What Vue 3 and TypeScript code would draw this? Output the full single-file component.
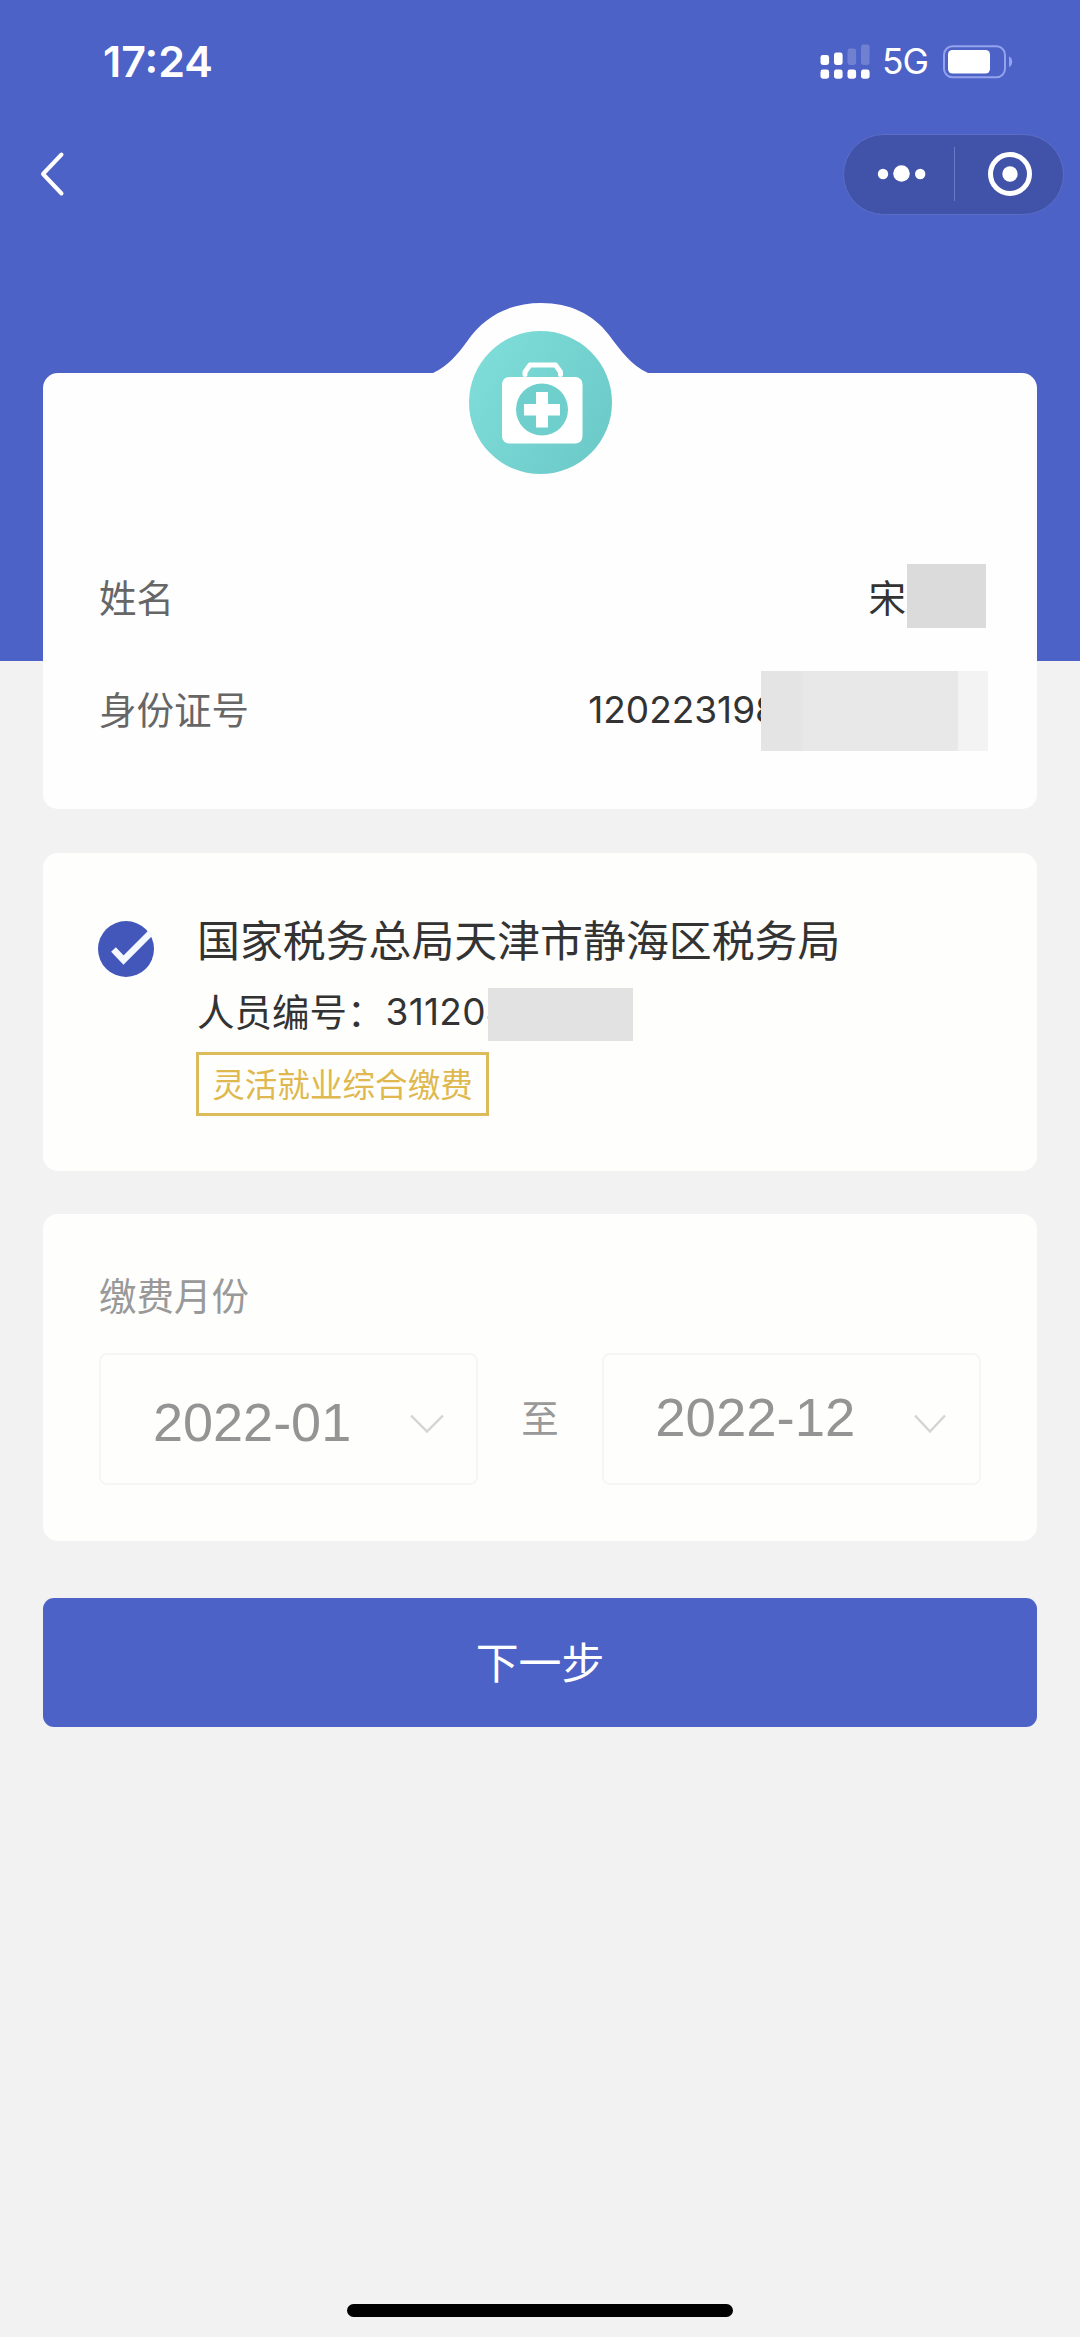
<script setup lang="ts">
import { ref } from 'vue'

interface Period {
  id: string
  value: string
}

const checked = ref(true)
const start: Period = { id: 'start', value: '2022-01' }
const end: Period = { id: 'end', value: '2022-12' }
</script>

<template>
  <div class="page">
    <header class="hero">
      <div class="status">
        <span class="time">17:24</span>
        <div class="indicators">
          <svg class="signal" width="50" height="36" viewBox="0 0 50 36" fill="#fff">
            <rect x="0.5" y="11" width="8.6" height="10" rx="2.4" />
            <rect x="14" y="8.5" width="8.6" height="12.5" rx="2.4" />
            <g opacity="0.2">
              <rect x="27.5" y="4.5" width="8.6" height="16.5" rx="2.4" />
              <rect x="41" y="0.5" width="8.6" height="20.5" rx="2.4" />
            </g>
            <rect x="0.5" y="25.5" width="8.6" height="9.2" rx="2.4" />
            <rect x="14" y="25.5" width="8.6" height="9.2" rx="2.4" />
            <rect x="27.5" y="25.5" width="8.6" height="9.2" rx="2.4" />
            <rect x="41" y="25.5" width="8.6" height="9.2" rx="2.4" />
          </svg>
          <span class="network">5G</span>
          <svg class="battery" width="70" height="34" viewBox="0 0 70 34">
            <rect x="1" y="1.2" width="61" height="31" rx="8.5" fill="none" stroke="#94a2ee" stroke-width="2" />
            <rect x="5" y="5" width="42" height="23.5" rx="4.5" fill="#fff" />
            <path d="M66 11.500C70.300 13 70.300 20.500 66 22z" fill="#94a2ee" />
          </svg>
        </div>
      </div>
      <nav class="nav">
        <svg class="back" width="30" height="50" viewBox="0 0 30 50" fill="none" stroke="#fff" stroke-width="4" stroke-linecap="round" stroke-linejoin="round">
          <path d="M24.500 5.500L6 25L24.500 44.500" />
        </svg>
        <div class="capsule">
          <svg class="more" width="50" height="20" viewBox="0 0 50 20" fill="#fff">
            <circle cx="6" cy="10" r="5.2" />
            <circle cx="24.500" cy="9.500" r="8.300" />
            <circle cx="43.200" cy="10" r="5.200" />
          </svg>
          <i class="divider"></i>
          <svg class="close" width="46" height="46" viewBox="0 0 46 46">
            <circle cx="23" cy="23" r="19.500" fill="none" stroke="#fff" stroke-width="5" />
            <circle cx="23" cy="23" r="7.700" fill="#fff" />
          </svg>
        </div>
      </nav>
    </header>

    <main class="content">
      <section class="card person">
        <svg class="emblem" width="220" height="175" viewBox="0 0 220 175">
          <defs>
            <linearGradient id="mint" x1="0" y1="0.200" x2="1" y2="0.800">
              <stop offset="0" stop-color="#7fded9" />
              <stop offset="1" stop-color="#6bc9c8" />
            </linearGradient>
          </defs>
          <path d="M2 71C17 64 26 53 36 39.500C54 13 80 1 110 1C139 1 162 12 178 33C190 49 200 63 217 71V75H2z" fill="#fefefe" />
          <circle cx="109.500" cy="100.500" r="71.500" fill="url(#mint)" />
          <path d="M94 72.500V70L99 63H124.500L129.500 70V72.500" fill="none" stroke="#fff" stroke-width="5" stroke-linecap="round" stroke-linejoin="round" />
          <rect x="71" y="75" width="80.500" height="66.500" rx="7" fill="#fff" />
          <circle cx="111" cy="107.500" r="26" fill="#6fcfcc" />
          <path d="M105 90h12v12h12v11.500h-12v12h-12v-12h-12v-11.500h12z" fill="#fff" />
        </svg>
        <div class="row name-row">
          <span class="label">姓名</span>
          <span class="value"><span class="surname">宋</span><i class="mask mask-name"></i></span>
        </div>
        <div class="row id-row">
          <span class="label">身份证号</span>
          <span class="value digits"><span class="id-number">120223198</span><i class="mask mask-id"></i></span>
        </div>
      </section>

      <section class="card office">
        <svg class="check" width="56" height="56" viewBox="0 0 56 56" @click="checked = !checked">
          <circle cx="28" cy="28" r="28" fill="#4357bb" />
          <path v-if="checked" d="M15.500 28.500L25.500 39L53 11.500" fill="none" stroke="#f4f8ff" stroke-width="6.500" />
        </svg>
        <div class="office-info">
          <div class="office-name">国家税务总局天津市静海区税务局</div>
          <div class="member">
            <span class="member-label">人员编号：</span><span class="digits number">311204</span><i class="mask mask-member"></i>
          </div>
          <div class="tag">灵活就业综合缴费</div>
        </div>
      </section>

      <section class="card months">
        <div class="months-label">缴费月份</div>
        <div class="range">
          <div class="picker" :class="start.id">
            <span>{{ start.value }}</span>
            <svg width="36" height="22" viewBox="0 0 36 22" fill="none" stroke="#d4d4d4" stroke-width="2.400"><path d="M2 2.500L18 18.500L34 2.500" /></svg>
          </div>
          <span class="to">至</span>
          <div class="picker" :class="end.id">
            <span>{{ end.value }}</span>
            <svg width="34" height="22" viewBox="0 0 34 22" fill="none" stroke="#d4d4d4" stroke-width="2.400"><path d="M2 2.500L17 18.500L32 2.500" /></svg>
          </div>
        </div>
      </section>

      <button class="next" type="button">下一步</button>
    </main>
    <div class="home-bar"></div>
  </div>
</template>

<style>
body {
  margin: 0;
  background: #f2f2f2;
}
</style>

<style scoped>
.page {
  width: 1080px;
  height: 2337px;
  display: flex;
  flex-direction: column;
  overflow: hidden;
  box-sizing: border-box;
  background: linear-gradient(#4c62c6 661px, #f2f2f2 661px);
  font-family: 'Noto Sans CJK SC', sans-serif;
  color: #333;
}
.page * {
  box-sizing: border-box;
}
.page svg {
  display: block;
  flex: none;
}
.hero {
  height: 373px;
  flex: none;
  color: #fff;
  font-family: Inter, sans-serif;
}
.status {
  height: 124px;
  padding: 0 67px 0 103px;
  display: flex;
  justify-content: space-between;
  align-items: center;
}
.time {
  font-size: 43px;
  font-weight: 600;
  line-height: 60px;
  padding-bottom: 2px;
}
.indicators {
  display: flex;
  align-items: center;
}
.network {
  margin-left: 12px;
  width: 46px;
  margin-right: 15px;
  font-size: 35.500px;
  line-height: 50px;
  letter-spacing: -1px;
}
.nav {
  padding: 0 16px 0 37px;
  height: 100px;
  display: flex;
  justify-content: space-between;
  align-items: center;
}
.capsule {
  width: 221px;
  height: 81px;
  border: 1.500px solid #5b6dc6;
  border-radius: 41px;
  background: #4153a9;
  display: flex;
  align-items: center;
  padding-left: 33px;
}
.divider {
  width: 1px;
  height: 54px;
  margin-left: 27px;
  background: #6b7bc6;
}
.close {
  margin-left: 32px;
}
.content {
  padding: 0 43px;
  display: flex;
  flex-direction: column;
}
.card {
  border-radius: 15px;
  background: #fefefd;
}
.person {
  height: 436px;
  background: #fefefe;
  display: flex;
  flex-direction: column;
  padding: 0 49px 0 56px;
}
.emblem {
  margin: -71px 0 0 332px;
}
.row {
  display: flex;
  justify-content: space-between;
  align-items: center;
  font-size: 37.500px;
  line-height: 54px;
}
.name-row {
  height: 64px;
  margin-top: 87px;
}
.id-row {
  height: 80px;
  margin-top: 43px;
}
.label {
  color: #666;
}
.id-row .label {
  padding-bottom: 6px;
}
.value {
  display: flex;
  align-items: center;
}
.digits {
  font-family: Inter, 'Noto Sans CJK SC', sans-serif;
  font-size: 37px;
}
.id-number {
  padding-bottom: 2px;
}
.mask {
  display: block;
  position: relative;
  flex: none;
}
.mask-name {
  width: 79px;
  height: 64px;
  margin: 0 2px 0 1px;
  background: #dbdbdb;
}
.mask-id {
  width: 227px;
  height: 80px;
  margin-left: -17px;
  background: linear-gradient(90deg, #e4e4e4 39px, #e8e8e8 43px 197px, #f3f3f3 197px);
}
.office {
  height: 318px;
  margin-top: 44px;
  padding: 0 55px;
  display: flex;
}
.check {
  margin-top: 68px;
}
.office-info {
  margin-left: 43px;
}
.office-name {
  margin-top: 55px;
  height: 63px;
  line-height: 60px;
  font-size: 42.900px;
  white-space: nowrap;
}
.member {
  display: flex;
  align-items: center;
  height: 53px;
  margin-top: 17px;
  font-size: 37.500px;
  line-height: 44px;
}
.member-label {
  padding-bottom: 9px;
}
.number {
  width: 124px;
  margin-left: 1px;
  padding-bottom: 5px;
  letter-spacing: 0.300px;
}
.mask-member {
  width: 145px;
  height: 53px;
  margin-left: -22px;
  background: #e2e2e2;
}
.tag {
  width: 293px;
  height: 64px;
  margin: 11px 0 0 -1px;
  border: 3px solid #dcbc5a;
  color: #dfb94f;
  font-size: 32.600px;
  line-height: 55px;
  text-align: center;
  white-space: nowrap;
}
.months {
  height: 327px;
  margin-top: 43px;
  padding: 50px 56px 0;
}
.months-label {
  height: 62px;
  line-height: 60px;
  font-size: 37.500px;
  color: #999;
}
.range {
  margin-top: 27px;
  display: flex;
  align-items: center;
  color: #999;
}
.picker {
  width: 380px;
  height: 132px;
  border: 2px solid #f6f6f6;
  border-radius: 8px;
  display: flex;
  align-items: center;
  font-family: 'Liberation Sans', Arial, sans-serif;
  font-size: 54.500px;
  line-height: 60px;
  color: #949494;
}
.picker span {
  padding-top: 6px;
}
.start {
  padding-left: 52px;
  font-size: 54px;
}
.start svg {
  margin: 9px 0 0 58px;
}
.end {
  padding-left: 51px;
}
.end span {
  padding: 0 0 2px;
}
.end svg {
  margin: 9px 0 0 58px;
}
.to {
  width: 125px;
  text-align: center;
  font-size: 37.500px;
  line-height: 60px;
  padding-bottom: 6px;
}
.next {
  height: 129px;
  margin-top: 57px;
  padding: 0 0 6px;
  border: 0;
  border-radius: 11px;
  background: #4c62c6;
  color: #fff;
  font-family: inherit;
  font-size: 42.900px;
  line-height: 60px;
}
.home-bar {
  width: 386px;
  height: 13px;
  margin: auto auto 20px;
  border-radius: 7px;
  background: #000;
}
</style>
